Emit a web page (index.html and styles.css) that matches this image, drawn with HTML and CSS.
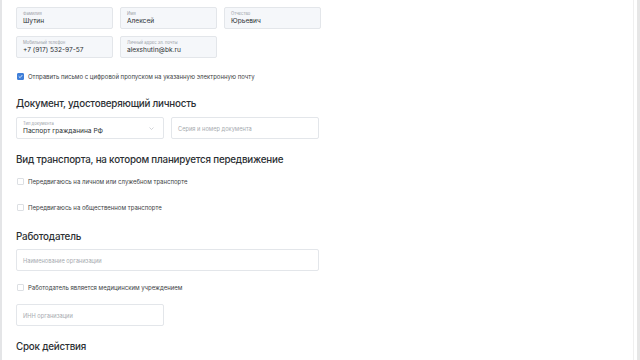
FILE: index.html
```html
<!DOCTYPE html>
<html lang="ru">
<head>
    <meta charset="UTF-8">
    <meta name="viewport" content="width=device-width, initial-scale=1.0">
    <title>Цифровой пропуск</title>
    <link rel="stylesheet" href="styles.css">
</head>
<body>
    <div class="edge"></div>
    <main class="form">
        <!-- Персональные данные -->
        <div class="grid3 row-first">
            <div class="field filled">
                <span class="label">Фамилия</span>
                <span class="value">Шутин</span>
            </div>
            <div class="field filled">
                <span class="label">Имя</span>
                <span class="value">Алексей</span>
            </div>
            <div class="field filled">
                <span class="label">Отчество</span>
                <span class="value">Юрьевич</span>
            </div>
        </div>
        <div class="grid3 row-next">
            <div class="field filled">
                <span class="label">Мобильный телефон</span>
                <span class="value">+7 (917) 532-97-57</span>
            </div>
            <div class="field filled">
                <span class="label">Личный адрес эл. почты</span>
                <span class="value">alexshutin@bk.ru</span>
            </div>
        </div>
        <label class="check cb-mail">
            <span class="box checked">
                <svg viewBox="0 0 10 10" width="7" height="7"><path d="M2 5.2 L4.2 7.3 L8 2.8" fill="none" stroke="#fff" stroke-width="1.6" stroke-linecap="round" stroke-linejoin="round"/></svg>
            </span>
            Отправить письмо с цифровой пропуском на указанную электронную почту
        </label>

        <!-- Документ -->
        <h2 class="title t-doc">Документ, удостоверяющий личность</h2>
        <div class="grid2 row-doc">
            <div class="field select">
                <span class="label">Тип документа</span>
                <span class="value">Паспорт гражданина РФ</span>
                <svg class="arrow" viewBox="0 0 10 6" width="5" height="3"><path d="M1 1 L5 5 L9 1" fill="none" stroke="#b5b9bf" stroke-width="1.2"/></svg>
            </div>
            <div class="field empty">
                <span class="placeholder">Серия и номер документа</span>
            </div>
        </div>

        <!-- Транспорт -->
        <h2 class="title t-transport">Вид транспорта, на котором планируется передвижение</h2>
        <label class="check cb-car"><span class="box"></span>Передвигаюсь на личном или служебном транспорте</label>
        <label class="check cb-bus"><span class="box"></span>Передвигаюсь на общественном транспорте</label>

        <!-- Работодатель -->
        <h2 class="title t-work">Работодатель</h2>
        <div class="field empty wide row-org">
            <span class="placeholder">Наименование организации</span>
        </div>
        <label class="check cb-med"><span class="box"></span>Работодатель является медицинским учреждением</label>
        <div class="field empty half row-inn">
            <span class="placeholder">ИНН организации</span>
        </div>

        <h2 class="title t-term">Срок действия</h2>
    </main>
    <div class="rail"><div class="scroll"></div></div>
</body>
</html>
```

FILE: styles.css
```css
html, body {
    margin: 0;
    height: 360px;
    overflow: hidden;
}
body {
    display: flex;
    background: #fff;
    font-family: Inter, "Noto Sans", sans-serif;
    color: #2b2f33;
}
.edge {
    width: 2px;
    background: #e4e5e7;
}
.form {
    flex: 1;
    padding-left: 14px;
}
.rail {
    width: 6px;
    display: flex;
    justify-content: flex-end;
    border-left: 1px solid #efefef;
}
.scroll {
    width: 3px;
    background: #e6e6e6;
}

.grid3 {
    display: grid;
    grid-template-columns: repeat(3, 97px);
    gap: 7px;
}
.grid2 {
    display: grid;
    grid-template-columns: 148px 148px;
    gap: 7px;
}
.row-first { margin-top: 7px; }
.row-next { margin-top: 7px; }
.row-doc { margin-top: 6px; }

.field {
    box-sizing: border-box;
    height: 22px;
    border: 1px solid #e3e6ea;
    border-radius: 2px;
    padding: 3px 6px 0;
    position: relative;
    display: flex;
    flex-direction: column;
}
.field.filled {
    background: #f5f7fa;
}
.field.select {
    background: #fff;
}
.field.empty {
    justify-content: center;
    padding-top: 0;
}
.field.wide { width: 303px; }
.field.half { width: 148px; }
.row-org { margin-top: 5px; }
.row-inn { margin-top: 12px; }

.label {
    font-size: 4.2px;
    line-height: 5px;
    color: #9aa0a6;
}
.value {
    font-size: 6.6px;
    line-height: 11px;
    color: #2b2f33;
}
.placeholder {
    font-size: 5.7px;
    color: #a7abb0;
}
.arrow {
    position: absolute;
    right: 9px;
    top: 9px;
}

.check {
    display: flex;
    align-items: center;
    gap: 4px;
    height: 10px;
    font-size: 6px;
    color: #3a3e42;
    margin-left: 1px;
}
.box {
    box-sizing: border-box;
    width: 7px;
    height: 7px;
    border: 1px solid #dcdfe3;
    border-radius: 1px;
    background: #fff;
    display: flex;
    align-items: center;
    justify-content: center;
}
.box.checked {
    background: #3f7fd9;
    border-color: #3f7fd9;
}
.cb-mail { margin-top: 13px; }
.cb-car { margin-top: 9px; }
.cb-bus { margin-top: 16px; }
.cb-med { margin-top: 11px; }

.title {
    margin: 0;
    font-size: 9.8px;
    line-height: 14px;
    letter-spacing: -0.2px;
    font-weight: 500;
    color: #2b2f33;
}
.t-doc { margin-top: 16px; }
.t-transport { margin-top: 14px; }
.t-work { margin-top: 18px; }
.t-term { margin-top: 14px; }
```
